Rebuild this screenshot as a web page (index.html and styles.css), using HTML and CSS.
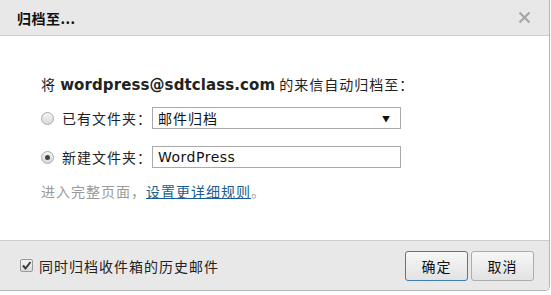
FILE: index.html
```html
<!DOCTYPE html>
<html lang="zh-CN">
<head>
    <meta charset="UTF-8">
    <title>归档至...</title>
    <link rel="stylesheet" href="styles.css">
</head>
<body>
    <div class="dialog">
        <div class="dialog-header">
            <span class="dialog-title">归档至...</span>
            <svg class="dialog-close" width="13" height="13" viewBox="0 0 13 13">
                <path d="M1.5 1.5 L11.5 11.5 M11.5 1.5 L1.5 11.5" stroke="#a6a6a6" stroke-width="2.2" fill="none"/>
            </svg>
        </div>

        <div class="dialog-body">
            <p class="intro">将 <b class="addr">wordpress@sdtclass.com</b> 的来信自动归档至：</p>

            <div class="row">
                <span class="radio"></span>
                <span class="row-label">已有文件夹：</span>
                <div class="field select">
                    <span>邮件归档</span>
                    <span class="arrow">&#9660;</span>
                </div>
            </div>

            <div class="row row-new">
                <span class="radio checked"></span>
                <span class="row-label">新建文件夹：</span>
                <div class="field field-text">WordPress</div>
            </div>

            <p class="more">进入完整页面，<a href="#">设置更详细规则</a>。</p>
        </div>

        <div class="dialog-footer">
            <label class="history">
                <span class="checkbox">
                    <svg width="11" height="11" viewBox="0 0 11 11">
                        <path d="M2 5.5 L4.5 8.5 L9.5 2" stroke="#3a3a3a" stroke-width="2" fill="none"/>
                    </svg>
                </span>
                同时归档收件箱的历史邮件
            </label>
            <div class="buttons">
                <button class="btn btn-primary">确定</button>
                <button class="btn">取消</button>
            </div>
        </div>
    </div>
</body>
</html>
```

FILE: styles.css
```css
body {
    margin: 0;
    padding: 0;
    background-color: #fff;
    font-family: "Noto Sans CJK SC", sans-serif;
    font-size: 14px;
    color: #222;
}

.dialog {
    width: 549px;
    border-right: 1px solid #b4b4b4;
    border-bottom: 1px solid #b4b4b4;
    border-bottom-right-radius: 5px;
    overflow: hidden;
}

.dialog-header {
    height: 35px;
    background-color: #e8e8e8;
    border-bottom: 1px solid #cdcdcd;
    display: flex;
    align-items: center;
    justify-content: space-between;
    padding: 0 18px 0 17px;
}

.dialog-title {
    font-weight: bold;
    font-size: 14px;
    color: #111;
    letter-spacing: 0.5px;
}

.dialog-close {
    display: block;
}

.dialog-body {
    height: 204px;
    box-sizing: border-box;
    padding: 38px 0 0 41px;
}

.intro {
    margin: 0;
    line-height: 20px;
    letter-spacing: 1px;
}

.addr {
    font-family: "DejaVu Sans", sans-serif;
    font-size: 15px;
    letter-spacing: 0.1px;
}

.row {
    display: flex;
    align-items: center;
    margin-top: 12px;
    height: 22px;
}

.row-new {
    margin-top: 17px;
}

.radio {
    width: 11px;
    height: 11px;
    border: 1px solid #a9a9a9;
    border-radius: 50%;
    background: linear-gradient(#f4f4f4, #d9d9d9);
    position: relative;
    margin-right: 8px;
}

.radio.checked::after {
    content: "";
    position: absolute;
    left: 3px;
    top: 3px;
    width: 5px;
    height: 5px;
    border-radius: 50%;
    background-color: #444;
}

.row-label {
    width: 90px;
    letter-spacing: 1px;
    color: #222;
}

.field {
    width: 249px;
    height: 22px;
    box-sizing: border-box;
    border: 1px solid #a9a9a9;
    padding: 0 5px;
    display: flex;
    align-items: center;
    color: #111;
}

.select {
    justify-content: space-between;
    padding-right: 9px;
    letter-spacing: 1px;
}

.field-text {
    font-family: "DejaVu Sans", sans-serif;
    letter-spacing: 0.5px;
}

.arrow {
    font-size: 8px;
    color: #111;
}

.more {
    margin: 13px 0 0 0;
    line-height: 20px;
    color: #9a9a9a;
    letter-spacing: 1px;
}

.more a {
    color: #1b5d8c;
    text-decoration: underline;
}

.dialog-footer {
    height: 49px;
    background-color: #e8e8e8;
    border-top: 1px solid #cdcdcd;
    display: flex;
    align-items: center;
    justify-content: space-between;
    padding: 0 15px 0 20px;
}

.history {
    display: flex;
    align-items: center;
    color: #222;
    letter-spacing: 1px;
}

.checkbox {
    width: 11px;
    height: 11px;
    border: 1px solid #9a9a9a;
    border-radius: 2px;
    background: linear-gradient(#f4f4f4, #dcdcdc);
    margin-right: 6px;
}

.checkbox svg {
    display: block;
}

.buttons {
    display: flex;
    gap: 3px;
}

.btn {
    width: 63px;
    height: 30px;
    border: 1px solid #adadad;
    border-radius: 3px;
    background: linear-gradient(#f7f7f7, #e2e2e2);
    font-family: "Noto Sans CJK SC", sans-serif;
    font-size: 14px;
    letter-spacing: 1px;
    color: #111;
    padding: 0;
}

.btn-primary {
    border-color: #3b7fb3;
}
```
